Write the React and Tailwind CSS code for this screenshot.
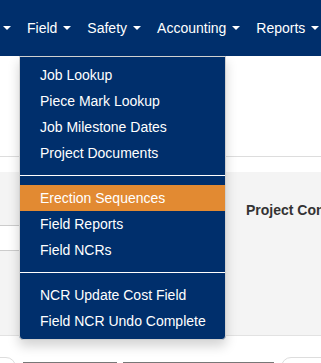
export default function App() {
  const Caret = () => (
    <span className="inline-block w-0 h-0 ml-[6px] align-middle border-t-4 border-t-white border-x-4 border-x-transparent" />
  );
  const Item = ({ children, active }) => (
    <div
      className={
        "px-5 py-[3px] leading-5 text-[14px] text-white whitespace-nowrap " +
        (active ? "bg-[#e28a32]" : "")
      }
    >
      {children}
    </div>
  );
  const Divider = () => <div className="h-px my-[9px] bg-white" />;

  return (
    <div
      className="relative w-[321px] h-[363px] overflow-hidden bg-white"
      style={{ fontFamily: '"Liberation Sans", Arial, sans-serif' }}
    >
      {/* Nav */}
      <div className="h-[56px] bg-[#002f6c] flex items-center pl-[3px] text-[14px] text-white whitespace-nowrap">
        <div className="flex items-center pr-2">
          <span className="inline-block w-0 h-0 align-middle border-t-4 border-t-white border-x-4 border-x-transparent" />
        </div>
        <div className="flex items-center px-2">
          Field
          <Caret />
        </div>
        <div className="flex items-center px-2">
          Safety
          <Caret />
        </div>
        <div className="flex items-center px-2">
          Accounting
          <Caret />
        </div>
        <div className="flex items-center px-2">
          Reports
          <Caret />
        </div>
      </div>

      {/* Top white section */}
      <div className="h-[101px] border-b border-[#dddddd] bg-white" />
      <div className="h-[15px] bg-white" />

      {/* Gray panel */}
      <div className="h-[164px] bg-[#f4f4f4] border-b border-[#e2e2e2] flex">
        <div className="w-[226px] shrink-0 flex flex-col">
          <div className="h-[53px]" />
          <div className="h-[26px] bg-white border-y border-[#cccccc]" />
        </div>
        <div className="pl-[20px] pt-[28px] text-[14px] font-bold text-[#333333] whitespace-nowrap">
          Project Contacts
        </div>
      </div>

      {/* Bottom controls row */}
      <div className="mt-[21px] flex items-start h-[20px]">
        <div className="w-[36px] -ml-[20px] h-[20px] rounded-full border border-[#dddddd] shrink-0" />
        <div className="ml-[7px] w-[94px] h-[20px] border-t border-[#777777] mt-[5px] shrink-0" />
        <div className="ml-[6px] w-[151px] h-[20px] border-t border-[#777777] mt-[5px] shrink-0" />
        <div className="ml-[7px] w-[60px] h-[20px] rounded-full border border-[#dddddd] shrink-0" />
      </div>

      {/* Dropdown menu */}
      <div className="absolute left-[19px] top-[56px] w-[207px] bg-[#002f6c] border border-[#d0d0d0] rounded-b-[4px] py-[5px] shadow-[0_6px_12px_rgba(0,0,0,0.175)]">
        <Item>Job Lookup</Item>
        <Item>Piece Mark Lookup</Item>
        <Item>Job Milestone Dates</Item>
        <Item>Project Documents</Item>
        <Divider />
        <Item active>Erection Sequences</Item>
        <Item>Field Reports</Item>
        <Item>Field NCRs</Item>
        <Divider />
        <Item>NCR Update Cost Field</Item>
        <Item>Field NCR Undo Complete</Item>
      </div>
    </div>
  );
}
